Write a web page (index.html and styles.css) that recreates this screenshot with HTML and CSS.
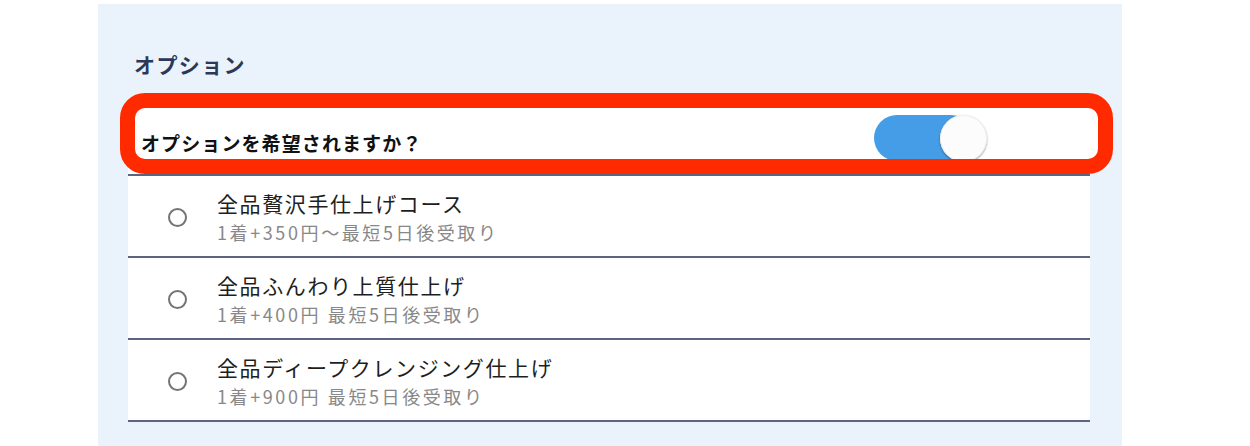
FILE: index.html
```html
<!DOCTYPE html>
<html lang="ja">
<head>
<meta charset="utf-8">
<title>オプション</title>
<link rel="stylesheet" href="styles.css">
</head>
<body>
<section class="panel">
  <h2 class="heading">オプション</h2>
  <div class="toggle-row">
    <span class="question">オプションを希望されますか？</span>
    <span class="switch"><span class="knob"></span></span>
  </div>
  <ul class="options">
    <li class="option">
      <span class="radio"></span>
      <div class="option-text">
        <div class="title">全品贅沢手仕上げコース</div>
        <div class="sub">1着+350円〜最短5日後受取り</div>
      </div>
    </li>
    <li class="option">
      <span class="radio"></span>
      <div class="option-text">
        <div class="title">全品ふんわり上質仕上げ</div>
        <div class="sub">1着+400円 最短5日後受取り</div>
      </div>
    </li>
    <li class="option">
      <span class="radio"></span>
      <div class="option-text">
        <div class="title">全品ディープクレンジング仕上げ</div>
        <div class="sub">1着+900円 最短5日後受取り</div>
      </div>
    </li>
  </ul>
</section>
</body>
</html>
```
FILE: styles.css
```css
html, body {
  margin: 0;
  padding: 0;
  background: #ffffff;
}
body {
  font-family: "Noto Sans CJK JP", "Noto Sans", sans-serif;
  color: #222;
}
.panel {
  margin: 4px 0 0 98px;
  width: 1024px;
  box-sizing: border-box;
  padding: 0 32px 30px 30px;
  background: #eaf3fb;
}
.heading {
  margin: 0;
  padding: 45px 0 0 6px;
  height: 58px;
  box-sizing: border-box;
  font-size: 21px;
  line-height: 30px;
  font-weight: 700;
  letter-spacing: 1.4px;
  color: #2c3859;
}
.toggle-row {
  position: relative;
  z-index: 0;
  margin-top: 46px;
  height: 66px;
  display: flex;
  align-items: center;
  justify-content: space-between;
  background: #fff;
  border-bottom: 2px solid #5d6480;
  padding-left: 13px;
  padding-right: 103px;
}
.toggle-row::before,
.toggle-row::after {
  content: "";
  position: absolute;
  top: -15px;
  left: -8px;
  right: -23px;
  bottom: 0px;
  border: 15px solid #ff2a00;
  border-radius: 25px;
  box-sizing: border-box;
}
.toggle-row::before {
  z-index: -1;
  background: #fff;
  border-color: transparent;
}
.toggle-row::after {
  z-index: 1;
  pointer-events: none;
}
.question {
  font-size: 19px;
  font-weight: 700;
  letter-spacing: 1.1px;
  color: #111;
  line-height: 26px;
  margin-top: 3px;
}
.switch {
  position: relative;
  align-self: flex-start;
  width: 113px;
  height: 46px;
  margin-top: 7px;
  flex: none;
}
.switch::before {
  content: "";
  position: absolute;
  left: 0;
  top: 0;
  width: 100px;
  height: 46px;
  border-radius: 23px;
  background: #449de6;
}
.knob {
  position: absolute;
  right: 0;
  top: 0;
  width: 47px;
  height: 47px;
  border-radius: 50%;
  background: #fcfcfc;
  box-shadow: 0 1px 2px rgba(0, 0, 0, 0.45), inset 0 0 0 1px #eee;
}
.options {
  list-style: none;
  margin: 0;
  padding: 0;
}
.option {
  height: 80px;
  display: flex;
  align-items: flex-start;
  background: #fff;
  border-bottom: 2px solid #5d6480;
}
.radio {
  flex: none;
  width: 19px;
  height: 19px;
  box-sizing: border-box;
  border: 2px solid #747474;
  border-radius: 50%;
  margin: 32px 0 0 40px;
}
.option-text {
  margin-left: 30px;
  padding-top: 13px;
}
.title {
  font-size: 21px;
  line-height: 28px;
  letter-spacing: 1.6px;
  color: #1e1e1e;
}
.sub {
  margin-top: 3px;
  font-size: 18px;
  line-height: 24px;
  letter-spacing: 2.6px;
  color: #888888;
}
```
